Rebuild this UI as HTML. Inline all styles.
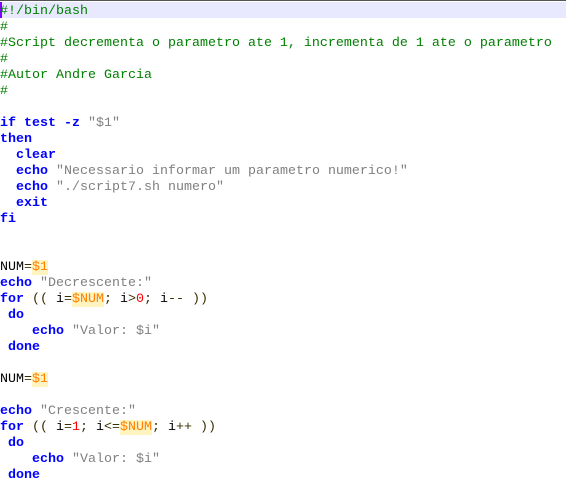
<!DOCTYPE html>
<html><head><meta charset="utf-8"><style>
html,body{margin:0;padding:0;background:#fff;width:566px;height:496px;overflow:hidden}
body{border-top:1px solid #555;box-sizing:border-box;position:relative}
.hl{position:absolute;left:0;top:1px;width:566px;height:16px;background:#e8e8ff}
.caret{position:absolute;left:0;top:1px;width:2px;height:16px;background:#8000ff}
pre{position:absolute;left:0;top:3px;margin:0;font-family:"Liberation Mono",monospace;font-size:13.33px;line-height:16px;color:#000}
.c{color:#008000}.k{color:#0000ff;font-weight:bold}.s{color:#808080}.v{color:#ff8000;background:#fff3c0}.n{color:#ff0000}.o{color:#3a3000}
</style></head><body><div class="hl"></div><div class="caret"></div><pre><span class="c">#!/bin/bash
#
#Script decrementa o parametro ate 1, incrementa de 1 ate o parametro
#
#Autor Andre Garcia
#</span>

<span class="k">if</span> <span class="k">test</span> <span class="k">-z</span> <span class="s">"$1"</span>
<span class="k">then</span>
  <span class="k">clear</span>
  <span class="k">echo</span> <span class="s">"Necessario informar um parametro numerico!"</span>
  <span class="k">echo</span> <span class="s">"./script7.sh numero"</span>
  <span class="k">exit</span>
<span class="k">fi</span>


NUM<span class="o">=</span><span class="v">$1</span>
<span class="k">echo</span> <span class="s">"Decrescente:"</span>
<span class="k">for</span> <span class="o">((</span> i<span class="o">=</span><span class="v">$NUM</span><span class="o">;</span> i<span class="o">&gt;</span><span class="n">0</span><span class="o">;</span> i<span class="o">--</span> <span class="o">))</span>
 <span class="k">do</span>
    <span class="k">echo</span> <span class="s">"Valor: $i"</span>
 <span class="k">done</span>

NUM<span class="o">=</span><span class="v">$1</span>

<span class="k">echo</span> <span class="s">"Crescente:"</span>
<span class="k">for</span> <span class="o">((</span> i<span class="o">=</span><span class="n">1</span><span class="o">;</span> i<span class="o">&lt;=</span><span class="v">$NUM</span><span class="o">;</span> i<span class="o">++</span> <span class="o">))</span>
 <span class="k">do</span>
    <span class="k">echo</span> <span class="s">"Valor: $i"</span>
 <span class="k">done</span></pre></body></html>
